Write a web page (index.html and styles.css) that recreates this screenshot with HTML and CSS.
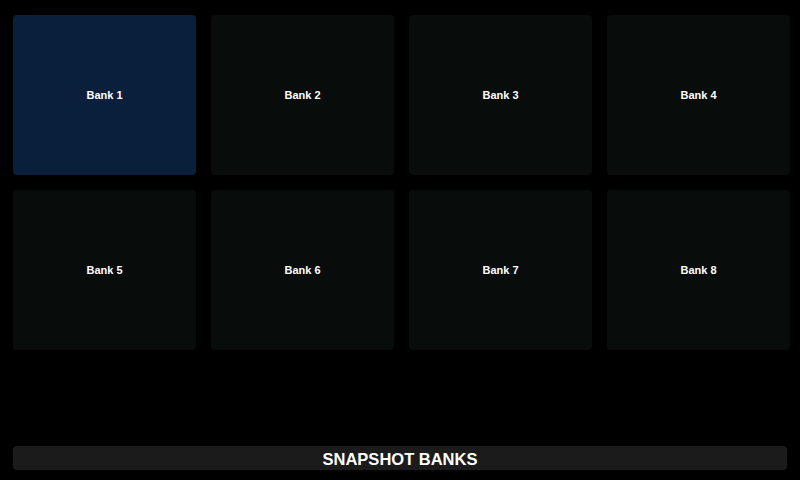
FILE: index.html
```html
<!DOCTYPE html>
<html>
<head>
<meta charset="utf-8">
<link rel="stylesheet" href="styles.css">
</head>
<body>
<div class="screen">
  <div class="grid">
    <div class="tile active">Bank 1</div>
    <div class="tile">Bank 2</div>
    <div class="tile">Bank 3</div>
    <div class="tile">Bank 4</div>
    <div class="tile">Bank 5</div>
    <div class="tile">Bank 6</div>
    <div class="tile">Bank 7</div>
    <div class="tile">Bank 8</div>
  </div>
  <div class="title-bar">SNAPSHOT BANKS</div>
</div>
</body>
</html>
```
FILE: styles.css
```css
html, body {
  margin: 0;
  padding: 0;
  background: #000;
}
.screen {
  width: 800px;
  height: 480px;
  box-sizing: border-box;
  padding: 15px 10px 10px 13px;
  display: flex;
  flex-direction: column;
  font-family: "Liberation Sans", Arial, sans-serif;
  color: #fff;
}
.grid {
  display: grid;
  grid-template-columns: repeat(4, 183px);
  grid-template-rows: repeat(2, 160px);
  gap: 15px;
}
.tile {
  background: #080c0a;
  border-radius: 4px;
  display: flex;
  align-items: center;
  justify-content: center;
  font-size: 11px;
  font-weight: bold;
}
.tile.active {
  background: #0a1f3b;
}
.title-bar {
  margin-top: auto;
  width: 774px;
  height: 24px;
  box-sizing: border-box;
  padding-top: 3px;
  background: #1b1b1b;
  border-radius: 4px;
  display: flex;
  align-items: center;
  justify-content: center;
  font-size: 16.5px;
  font-weight: bold;
}
```
